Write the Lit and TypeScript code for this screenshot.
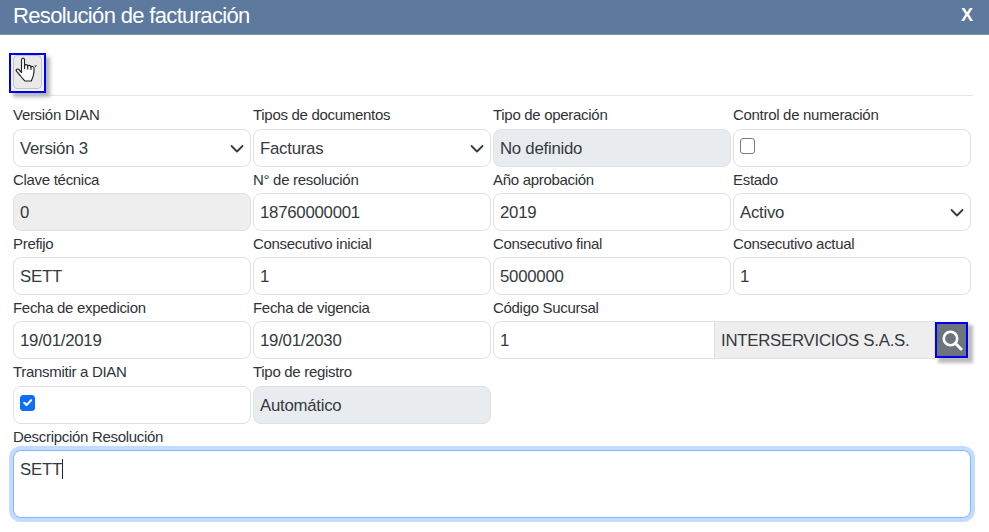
import { LitElement, html, css } from "lit";
import { customElement } from "lit/decorators.js";

const chevron = html`<svg class="chev" width="14" height="14" viewBox="0 0 14 14"><path d="M1.500 4l5.500 5.500L12.500 4" fill="none" stroke="#343a40" stroke-width="1.800" stroke-linecap="round" stroke-linejoin="round"/></svg>`;

@customElement("app-root")
export class AppRoot extends LitElement {
  static styles = css`
    :host { display: block; width: 989px; height: 532px; background: #fff; overflow: hidden; font-family: "Liberation Sans", Arial, sans-serif; color: #212529; }
    * { box-sizing: border-box; }
    .head { height: 35px; background: #5d7a9e; border-bottom: 1px solid #7f95b2; color: #fff; display: flex; align-items: center; justify-content: space-between; padding: 0 16px 3px 13px; }
    .title { font-size: 22px; line-height: 28px; letter-spacing: -0.66px; }
    .x { font-size: 18px; font-weight: 700; }
    .body { padding: 0 18px 0 13px; }
    .tools { height: 61px; border-bottom: 1px solid #e6e6e6; margin-right: -2px; padding-top: 18px; }
    .hand { width: 37px; height: 40px; margin-left: -4px; border: 2px solid #0000ee; background: #f2f2f2; box-shadow: 4px 4px 4px 0 #b5b5b5; padding: 0 2px 2px 2px; }
    .hand-in { width: 100%; height: 100%; background: #e9e9e9; border: 1px solid #c4c4c4; border-radius: 4px; display: flex; align-items: flex-start; justify-content: flex-start; padding: 1px 0 0 1px; }
    .grid { display: grid; grid-template-columns: repeat(4, 238px); column-gap: 2px; margin-top: 7px; }
    .f { height: 64px; display: flex; flex-direction: column; }
    .r4 { height: 65px; }
    .lbl { font-size: 15px; letter-spacing: -0.3px; line-height: 26px; height: 26px; color: #2f3337; white-space: nowrap; display: block; }
    .up .lbl { margin-top: -1px; margin-bottom: 1px; }
    .ctl { height: 38px; border: 1px solid #dee2e6; border-radius: 8px; background: #fff; font-size: 16.8px; letter-spacing: -0.25px; line-height: 24px; padding: 7px 6px 6px; color: #343a40; display: flex; align-items: center; justify-content: space-between; white-space: nowrap; width: 100%; }
    .dis { background: #e9ecef; }
    .dis2 { background: #eeeeee; }
    .box { width: 15px; height: 16px; border: 1px solid #7b7b7b; border-radius: 3px; background: #fff; margin: -6px 0 0 0; display: block; }
    .box.on { background: #0d6efd; border-color: #0d6efd; display: flex; align-items: center; justify-content: center; }
    .wide { grid-column: span 2; }
    .group { display: flex; height: 38px; width: 476px; }
    .g1 { width: 222px; flex: none; border-radius: 8px 0 0 8px; }
    .g2 { flex: none; width: 220px; border: 1px solid #dee2e6; border-left: 0; background: #eeeeee; font-size: 16.8px; letter-spacing: -0.25px; padding: 7px 6px 6px; color: #343a40; display: flex; align-items: center; white-space: nowrap; }
    .sbtn { width: 33px; height: 36px; margin-top: 1px; background: #6c757d; border: 2px solid #0000ee; box-shadow: 4px 4px 3px 1px #bdbdbd; display: flex; align-items: center; justify-content: center; flex: none; }
    .descl { height: 26px; line-height: 25px; font-size: 15px; letter-spacing: -0.3px; color: #2f3337; }
    .ta { height: 68px; width: 958px; border: 1px solid #86b7fe; border-radius: 8px; box-shadow: 0 0 0 4px #c2dbfe; padding: 7px 6px; font-size: 16.8px; letter-spacing: -0.25px; line-height: 24px; color: #343a40; background: #fff; }
    .caret { display: inline-block; width: 1px; height: 20px; background: #212529; vertical-align: -4px; }
  `;

  field(label: string, ctl: unknown, cls = "f") {
    return html`<div class=${cls}><div class="lbl">${label}</div>${ctl}</div>`;
  }
  text(v: string) { return html`<div class="ctl">${v}</div>`; }
  sel(v: string) { return html`<div class="ctl">${v}${chevron}</div>`; }
  dis(v: string) { return html`<div class="ctl dis">${v}</div>`; }

  render() {
    return html`
      <div class="head"><span class="title">Resolución de facturación</span><span class="x">X</span></div>
      <div class="body">
        <div class="tools">
          <div class="hand"><div class="hand-in">
            <svg width="23" height="27" viewBox="0 0 23 27"><path d="M6.500 15.500V3c0-2.600 3-2.600 3 0v8.500M9.500 9c.2-1.900 3-1.700 3.100.2l.2 2.800M12.700 9.600c.3-1.700 2.900-1.500 3.100.3l.2 2.600M16 10.400c.4-1.500 2.900-1.200 3 .6.100 3-.1 5.700-.7 7.600-.7 2.700-1.400 3.700-2 5.400H9.800c-1.500-1.800-3.200-3.700-4.600-5.500l-3.700-4.300c-1-1.500 1-2.900 2.300-1.700L6.500 15.500" fill="#fff" stroke="#222" stroke-width="1.150" stroke-linecap="round" stroke-linejoin="round"/><path d="M19.500 8.500l2.500-.5-1.500 2.500z" fill="#444"/></svg>
          </div></div>
        </div>
        <div class="grid">
          ${this.field("Versión DIAN", this.sel("Versión 3"), "f up")}
          ${this.field("Tipos de documentos", this.sel("Facturas"), "f up")}
          ${this.field("Tipo de operación", this.dis("No definido"), "f up")}
          ${this.field("Control de numeración", html`<div class="ctl"><span class="box"></span></div>`, "f up")}
          ${this.field("Clave técnica", html`<div class="ctl dis2">0</div>`)}
          ${this.field("N° de resolución", this.text("18760000001"))}
          ${this.field("Año aprobación", this.text("2019"))}
          ${this.field("Estado", this.sel("Activo"))}
          ${this.field("Prefijo", this.text("SETT"))}
          ${this.field("Consecutivo inicial", this.text("1"))}
          ${this.field("Consecutivo final", this.text("5000000"))}
          ${this.field("Consecutivo actual", this.text("1"))}
          ${this.field("Fecha de expedicion", this.text("19/01/2019"), "f r4")}
          ${this.field("Fecha de vigencia", this.text("19/01/2030"), "f r4")}
          <div class="f r4 wide">
            <div class="lbl">Código Sucursal</div>
            <div class="group">
              <div class="ctl g1">1</div>
              <div class="g2">INTERSERVICIOS S.A.S.</div>
              <div class="sbtn"><svg width="22" height="22" viewBox="0 0 22 22"><circle cx="9.500" cy="9.500" r="6.700" fill="none" stroke="#fff" stroke-width="2.600"/><path d="M14.500 14.500l5.500 5.500" stroke="#fff" stroke-width="3" stroke-linecap="round"/></svg></div>
            </div>
          </div>
          ${this.field("Transmitir a DIAN", html`<div class="ctl"><span class="box on"><svg width="13" height="13" viewBox="0 0 20 20"><path d="M5 10.500l3.500 3.500 7-7.500" fill="none" stroke="#fff" stroke-width="3.200" stroke-linecap="round" stroke-linejoin="round"/></svg></span></div>`, "f up")}
          ${this.field("Tipo de registro", this.dis("Automático"), "f up")}
        </div>
        <div class="descl">Descripción Resolución</div>
        <div class="ta">SETT<span class="caret"></span></div>
      </div>
    `;
  }
}
